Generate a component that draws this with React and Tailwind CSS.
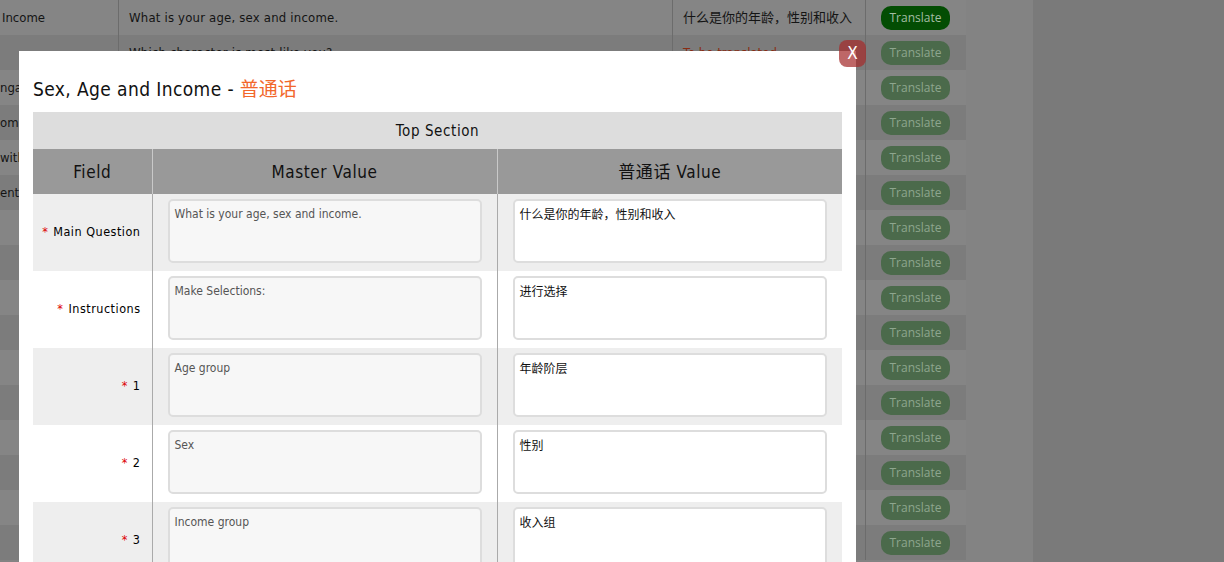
import React from 'react';

const bgRows = [
  { field: 'Income', master: 'What is your age, sex and income.', trans: '什么是你的年龄，性别和收入', active: true },
  { field: '', master: 'Which character is most like you?', trans: 'To be translated', todo: true },
  { field: 'ngagement', master: 'How engaged are you?', trans: '' },
  { field: 'om choice', master: 'Pick one at random', trans: '' },
  { field: 'with', master: 'Do you agree with this?', trans: '' },
  { field: 'entity', master: 'Who are you?', trans: '' },
  { field: '', master: '', trans: '' },
  { field: '', master: '', trans: '' },
  { field: '', master: '', trans: '' },
  { field: '', master: '', trans: '' },
  { field: '', master: '', trans: '' },
  { field: '', master: '', trans: '' },
  { field: '', master: '', trans: '' },
  { field: '', master: '', trans: '' },
  { field: '', master: '', trans: '' },
  { field: '', master: '', trans: '' },
];

const fields = [
  { label: 'Main Question', master: 'What is your age, sex and income.', trans: '什么是你的年龄，性别和收入' },
  { label: 'Instructions', master: 'Make Selections:', trans: '进行选择' },
  { label: '1', master: 'Age group', trans: '年龄阶层' },
  { label: '2', master: 'Sex', trans: '性别' },
  { label: '3', master: 'Income group', trans: '收入组' },
];

const sans = 'font-["DejaVu_Sans_Condensed","DejaVu_Sans","Noto_Sans_CJK_SC",sans-serif] font-stretch-condensed';

export default function App() {
  return (
    <div className={`relative h-[562px] w-[1224px] overflow-hidden bg-[#7a7a7a] ${sans}`}>
      {/* page behind the dialog */}
      <div className="w-[1033px] h-full bg-[#838383]">
        <div className="w-[966px]">
          {bgRows.map((r, i) => (
            <div key={i} className={`flex h-[35px] items-center text-[13px] text-[#141414] ${i % 2 ? 'bg-[#7c7c7c]' : 'bg-[#858585]'}`}>
              <div className={`w-[119px] h-full flex items-center border-r border-[#6c6c6c] overflow-hidden whitespace-nowrap ${i === 0 ? 'pl-[2px]' : 'pl-0'}`}>{r.field}</div>
              <div className="w-[554px] h-full flex items-center pl-[10px] border-r border-[#6c6c6c] whitespace-nowrap tracking-[0.2px]">{r.master}</div>
              <div className={`w-[193px] h-full flex items-center pl-[10px] border-r border-[#6c6c6c] whitespace-nowrap ${r.todo ? 'text-[#8a2c12]' : ''}`}>{r.trans}</div>
              <div className="flex-1 h-full flex items-center pl-[15px] pt-[1px]">
                <button className={`h-[24px] w-[69px] rounded-[10px] text-[12px] font-["Open_Sans",sans-serif] font-stretch-normal ${r.active ? 'bg-[#034d03] text-[#a3bda3]' : 'bg-[#4b6a4b] text-[#8ea68e]'}`}>
                  Translate
                </button>
              </div>
            </div>
          ))}
        </div>
      </div>

      {/* dialog */}
      <div className="absolute left-[19px] top-[51px] bottom-0 w-[837px] bg-white px-[14px]">
        <h2 className="h-[61px] pt-[25px] text-[19px] leading-[26px] text-[#111] tracking-[0.4px] whitespace-nowrap">
          Sex, Age and Income - <span className="text-[#f2672b] tracking-normal">普通话</span>
        </h2>
        <table className="w-[809px] border-collapse table-fixed">
          <colgroup>
            <col className="w-[119px]" />
            <col className="w-[345px]" />
            <col className="w-[345px]" />
          </colgroup>
          <thead>
            <tr className="h-[37px] bg-[#dddddd]">
              <th colSpan={3} className="pt-[2px] text-[15px] font-normal text-[#111] tracking-[0.6px]">Top Section</th>
            </tr>
            <tr className="h-[45px] bg-[#999999] text-[17px] text-[#111] tracking-[0.6px]">
              <th className="pt-[3px] font-normal border-r border-[#c9c9c9]">Field</th>
              <th className="pt-[3px] font-normal border-r border-[#c9c9c9]">Master Value</th>
              <th className="pt-[3px] font-normal">普通话 Value</th>
            </tr>
          </thead>
          <tbody>
            {fields.map((f, i) => (
              <tr key={f.label} className={`h-[77px] ${i % 2 ? 'bg-white' : 'bg-[#eeeeee]'}`}>
                <td className="text-right pr-[11px] text-[12.5px] font-normal text-black tracking-[0.5px] border-r border-[#aaaaaa] align-middle">
                  <span className="text-[#dd0000] mr-[5px]">*</span>{f.label}
                </td>
                <td className="pl-[15px] pr-[15px] pt-[5px] pb-[8px] align-top border-r border-[#aaaaaa]">
                  <textarea
                    readOnly
                    defaultValue={f.master}
                    className="block w-[314px] h-[64px] resize-none rounded-[5px] border-2 border-[#dddddd] bg-[#f7f7f7] px-[5px] py-[4px] text-[12px] text-[#555] outline-none"
                  />
                </td>
                <td className="pl-[15px] pr-[15px] pt-[5px] pb-[8px] align-top">
                  <textarea
                    readOnly
                    defaultValue={f.trans}
                    className="block w-[314px] h-[64px] resize-none rounded-[5px] border-2 border-[#dddddd] bg-white px-[5px] py-[5px] text-[12px] text-[#111] outline-none"
                  />
                </td>
              </tr>
            ))}
          </tbody>
        </table>
      </div>

      <button className="absolute left-[839px] top-[40px] h-[27px] w-[27px] rounded-[8px] bg-[rgba(165,45,45,0.72)] text-[17px] text-white flex items-center justify-center">
        X
      </button>
    </div>
  );
}
